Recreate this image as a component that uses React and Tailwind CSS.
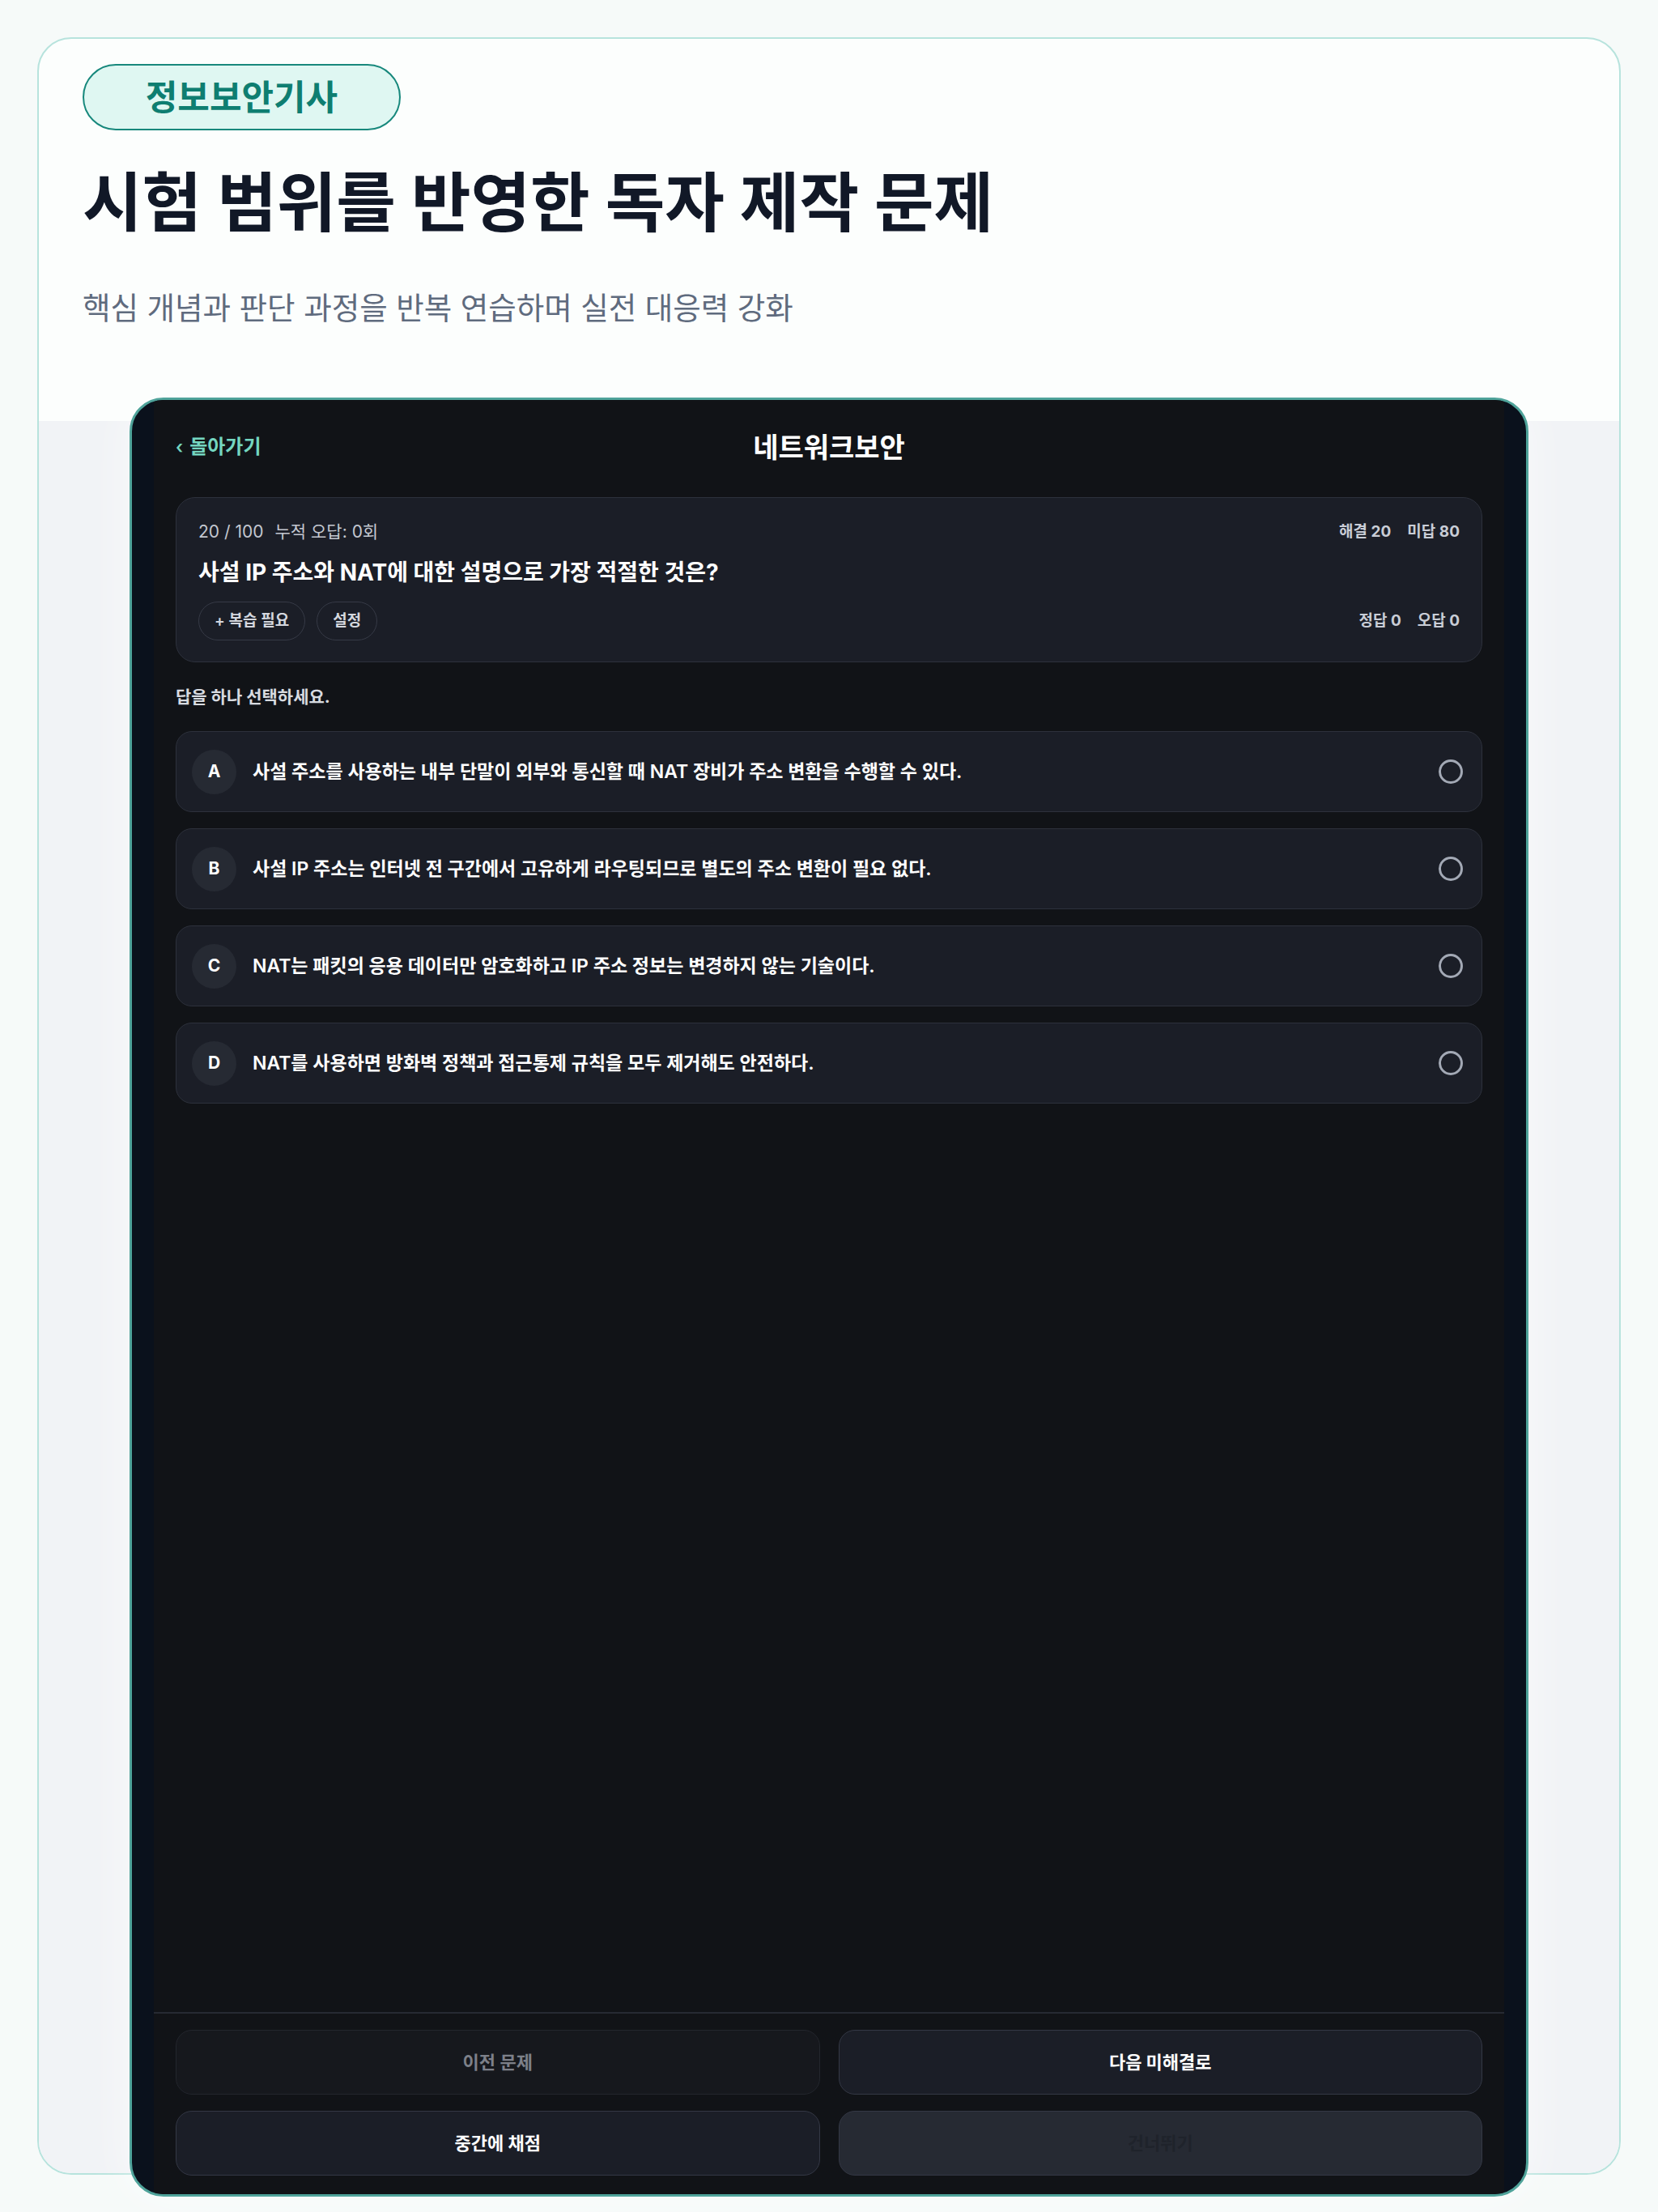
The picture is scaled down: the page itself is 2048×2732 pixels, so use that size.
import React, { useState } from 'react';

const options = [
  { key: 'A', text: '사설 주소를 사용하는 내부 단말이 외부와 통신할 때 NAT 장비가 주소 변환을 수행할 수 있다.' },
  { key: 'B', text: '사설 IP 주소는 인터넷 전 구간에서 고유하게 라우팅되므로 별도의 주소 변환이 필요 없다.' },
  { key: 'C', text: 'NAT는 패킷의 응용 데이터만 암호화하고 IP 주소 정보는 변경하지 않는 기술이다.' },
  { key: 'D', text: 'NAT를 사용하면 방화벽 정책과 접근통제 규칙을 모두 제거해도 안전하다.' },
];

const QuizScreen = () => {
  const [selected, setSelected] = useState(null);

  return (
    <div className="relative shrink-0 -mt-[29px] h-[2222px] rounded-[42px] border-[3px] border-[#4fa39a] bg-[#0a111c] overflow-hidden shadow-[0_0_60px_rgba(255,255,255,0.6)]">
      <div className="mx-[27px] h-full bg-[#111317] flex flex-col">
        {/* header */}
        <div className="h-[116px] px-[27px] grid grid-cols-[1fr_auto_1fr] items-center">
          <button className="justify-self-start flex items-center gap-[8px] text-[24px] font-semibold text-[#74d6c0] leading-none">
            <span className="text-[22px]">‹</span>
            <span>돌아가기</span>
          </button>
          <h2 className="text-[34px] font-bold text-white">네트워크보안</h2>
          <div />
        </div>

        <div className="px-[27px] mt-[4px] flex-1">
          {/* question card */}
          <div className="rounded-[24px] border border-[#2d313c] bg-[#1b1e27] px-[27px] pt-[28px] pb-[26px]">
            <div className="flex items-center justify-between leading-[28px]">
              <div className="text-[21px] text-[#c3c7d0] flex gap-[14px]">
                <span>20 / 100</span>
                <span>누적 오답: 0회</span>
              </div>
              <div className="text-[19px] font-bold text-[#c9cdd6] flex gap-[20px]">
                <span>해결 20</span>
                <span>미답 80</span>
              </div>
            </div>
            <p className="mt-[17px] text-[28px] font-bold text-white leading-[38px]">
              사설 IP 주소와 NAT에 대한 설명으로 가장 적절한 것은?
            </p>
            <div className="mt-[17px] flex items-center justify-between">
              <div className="flex gap-[14px]">
                <button className="h-[48px] px-[19px] rounded-full border border-[#363a46] text-[19px] font-semibold text-[#d4d7de]">
                  + 복습 필요
                </button>
                <button className="h-[48px] px-[19px] rounded-full border border-[#363a46] text-[19px] font-semibold text-[#d4d7de]">
                  설정
                </button>
              </div>
              <div className="text-[19px] font-bold text-[#c9cdd6] flex gap-[20px]">
                <span>정답 0</span>
                <span>오답 0</span>
              </div>
            </div>
          </div>

          <p className="mt-[29px] text-[21px] font-bold text-[#d8dbe0] leading-[28px]">답을 하나 선택하세요.</p>

          <div className="mt-[28px] flex flex-col gap-[20px]">
            {options.map((o) => (
              <button
                key={o.key}
                onClick={() => setSelected(o.key)}
                className="h-[100px] w-full rounded-[20px] border border-[#2d313c] bg-[#1b1e27] pl-[19px] pr-[23px] flex items-center text-left"
              >
                <span className="w-[55px] h-[55px] shrink-0 rounded-full bg-[#262a33] flex items-center justify-center text-[21px] font-bold text-white">
                  {o.key}
                </span>
                <span className="ml-[20px] flex-1 text-[23px] font-semibold text-white">{o.text}</span>
                <span
                  className={
                    selected === o.key
                      ? 'w-[30px] h-[30px] rounded-full border-[3px] border-[#74d6c0] bg-[#74d6c0]'
                      : 'w-[30px] h-[30px] rounded-full border-[3px] border-[#a3a9b5]'
                  }
                />
              </button>
            ))}
          </div>
        </div>

        {/* footer */}
        <div className="border-t-2 border-[#262a33] px-[27px] pt-[20px] pb-[23px] grid grid-cols-2 gap-x-[23px] gap-y-[20px]">
          <button className="h-[80px] rounded-[20px] border border-[#23262d] bg-[#16181d] text-[22px] font-semibold text-[#7d8089]">
            이전 문제
          </button>
          <button className="h-[80px] rounded-[20px] border border-[#343845] bg-[#1b1e27] text-[22px] font-bold text-white">
            다음 미해결로
          </button>
          <button className="h-[80px] rounded-[20px] border border-[#343845] bg-[#1b1e27] text-[22px] font-bold text-white">
            중간에 채점
          </button>
          <button className="h-[80px] rounded-[20px] border border-[#343845] bg-[#262a33] text-[22px] font-semibold text-[#1f232b]">
            건너뛰기
          </button>
        </div>
      </div>
    </div>
  );
};

const App = () => {
  return (
    <div className="min-h-screen bg-[#f6faf9] p-[46px] font-['Inter','Noto_Sans_CJK_KR',sans-serif]">
      <div className="rounded-[42px] border-2 border-[#b7e3dd] bg-[#fcfefd]">
        <div className="h-[472px] px-[54px] pt-[31px]">
          <div className="w-[393px] h-[82px] rounded-full border-2 border-[#17887c] bg-[#dff7f2] flex items-center justify-center text-[43px] font-semibold text-[#0e7e71]">
            정보보안기사
          </div>
          <h1 className="mt-[42px] text-[80px] leading-[94px] font-bold text-[#111827]">
            시험 범위를 반영한 독자 제작 문제
          </h1>
          <p className="mt-[60px] text-[37.5px] leading-[48px] text-[#5f6b7e]">
            핵심 개념과 판단 과정을 반복 연습하며 실전 대응력 강화
          </p>
        </div>
        <div className="h-[2164px] rounded-b-[40px] bg-[#f1f3f6] px-[112px] flex flex-col">
          <QuizScreen />
        </div>
      </div>
    </div>
  );
};

export default App;
